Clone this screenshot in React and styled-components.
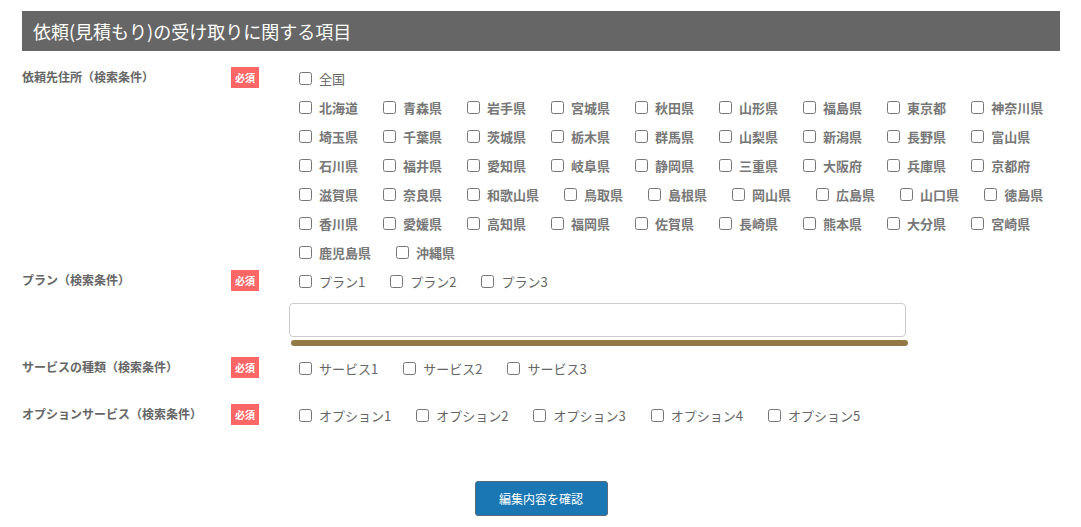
import styled, { createGlobalStyle } from "styled-components";

const GlobalStyle = createGlobalStyle`
    body {
        margin: 0;
        background: #fff;
        font-family: "Noto Sans CJK JP", "Liberation Sans", sans-serif;
    }
`;

const prefectures = [
    "北海道", "青森県", "岩手県", "宮城県", "秋田県", "山形県", "福島県", "東京都", "神奈川県",
    "埼玉県", "千葉県", "茨城県", "栃木県", "群馬県", "山梨県", "新潟県", "長野県", "富山県",
    "石川県", "福井県", "愛知県", "岐阜県", "静岡県", "三重県", "大阪府", "兵庫県", "京都府",
    "滋賀県", "奈良県", "和歌山県", "鳥取県", "島根県", "岡山県", "広島県", "山口県", "徳島県",
    "香川県", "愛媛県", "高知県", "福岡県", "佐賀県", "長崎県", "熊本県", "大分県", "宮崎県",
    "鹿児島県", "沖縄県",
];

const Page = styled.div`
    padding: 11px 21px 20px 22px;
`;

const Heading = styled.h2`
    margin: 0;
    height: 40px;
    line-height: 40px;
    padding-left: 11px;
    background: #666666;
    color: #fff;
    font-size: 18px;
    font-weight: 400;
`;

const Row = styled.div`
    display: grid;
    grid-template-columns: 209px 58px 1fr;
    margin-top: ${(p) => p.$top || 0}px;
`;

const Label = styled.div`
    font-size: 12px;
    font-weight: 700;
    color: #666;
    line-height: 25px;
`;

const Badge = styled.span`
    align-self: start;
    width: 28px;
    height: 21px;
    margin-top: 3px;
    background: #ff6666;
    color: #fff;
    font-size: 10px;
    font-weight: 700;
    display: flex;
    align-items: center;
    justify-content: center;
`;

const Field = styled.div`
    display: flex;
    flex-direction: column;
`;

const Checks = styled.div`
    display: flex;
    flex-wrap: wrap;
    column-gap: 25px;
    padding-left: 10px;
`;

const Check = styled.label`
    display: inline-flex;
    align-items: center;
    gap: 7px;
    height: 29px;
    font-size: 13px;
    font-weight: ${(p) => (p.$bold ? 700 : 400)};
    color: ${(p) => (p.$bold ? "#777" : "#666")};
    white-space: nowrap;

    input {
        margin: 0;
        width: 13px;
        height: 13px;
    }
`;

const LineBreak = styled.div`
    flex-basis: 100%;
    height: 0;
`;

const TextBox = styled.input`
    margin-top: 7px;
    width: 617px;
    height: 34px;
    box-sizing: border-box;
    border: 1px solid #cccccc;
    border-radius: 4px;
    outline: none;
`;

const Bar = styled.div`
    margin: 3px 0 0 2px;
    width: 617px;
    height: 6px;
    border-radius: 3px;
    background: #947947;
`;

const Footer = styled.div`
    display: flex;
    justify-content: center;
    margin-top: 51px;
`;

const Button = styled.button`
    width: 133px;
    height: 35px;
    background: #1a77b3;
    color: #fff;
    border: 1px solid #5a6a78;
    border-radius: 3px;
    font-family: inherit;
    font-size: 12px;
    cursor: pointer;
`;

function Options({ items, bold }) {
    return (
        <Checks>
            {items.map((item) => (
                <Check key={item} $bold={bold}>
                    <input type="checkbox" />
                    {item}
                </Check>
            ))}
        </Checks>
    );
}

export default function App() {
    return (
        <>
            <GlobalStyle />
            <Page>
                <Heading>依頼(見積もり)の受け取りに関する項目</Heading>

                <Row $top={13}>
                    <Label>依頼先住所（検索条件）</Label>
                    <Badge>必須</Badge>
                    <Checks>
                        <Check>
                            <input type="checkbox" />
                            全国
                        </Check>
                        <LineBreak />
                        {prefectures.map((pref) => (
                            <Check key={pref} $bold>
                                <input type="checkbox" />
                                {pref}
                            </Check>
                        ))}
                    </Checks>
                </Row>

                <Row>
                    <Label>プラン（検索条件）</Label>
                    <Badge>必須</Badge>
                    <Field>
                        <Options items={["プラン1", "プラン2", "プラン3"]} />
                        <TextBox type="text" />
                        <Bar />
                    </Field>
                </Row>

                <Row $top={8}>
                    <Label>サービスの種類（検索条件）</Label>
                    <Badge>必須</Badge>
                    <Options items={["サービス1", "サービス2", "サービス3"]} />
                </Row>

                <Row $top={18}>
                    <Label>オプションサービス（検索条件）</Label>
                    <Badge>必須</Badge>
                    <Options items={["オプション1", "オプション2", "オプション3", "オプション4", "オプション5"]} />
                </Row>

                <Footer>
                    <Button type="button">編集内容を確認</Button>
                </Footer>
            </Page>
        </>
    );
}
